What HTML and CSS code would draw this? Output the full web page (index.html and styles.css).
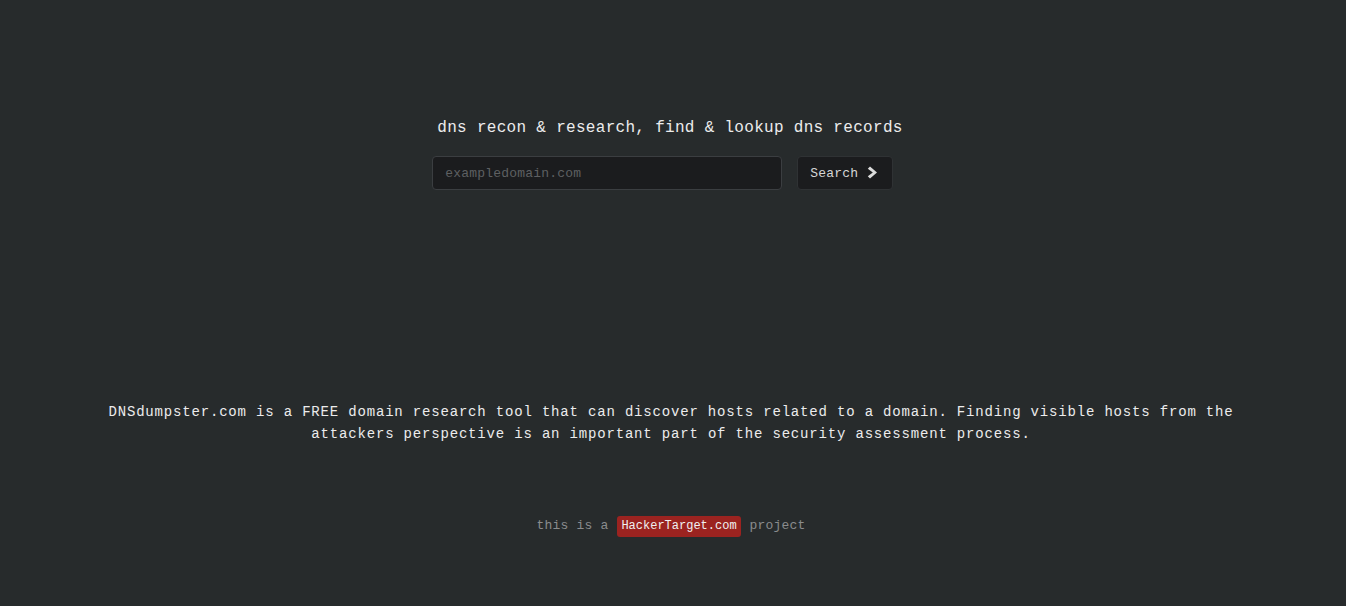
FILE: index.html
```html
<!DOCTYPE html>
<html>
<head>
<meta charset="utf-8">
<link rel="stylesheet" href="styles.css">
</head>
<body>
<div class="page">
  <section class="hero">
    <h1 class="tagline">dns recon &amp; research, find &amp; lookup dns records</h1>
    <form class="search">
      <input class="search-input" type="text" placeholder="exampledomain.com">
      <button class="search-btn" type="button">Search <svg class="chev" width="12" height="15" viewBox="0 0 12 15"><path d="M3 1.5 L10 7.5 L3 13.5 L0.8 11.3 L5.8 7.5 L0.8 3.7 Z" fill="#dcdcdc"/></svg></button>
    </form>
  </section>
  <p class="about">DNSdumpster.com is a FREE domain research tool that can discover hosts related to a domain. Finding visible hosts from the attackers perspective is an important part of the security assessment process.</p>
  <p class="credit">this is a <span class="badge">HackerTarget.com</span> project</p>
</div>
</body>
</html>
```
FILE: styles.css
```css
html, body {
  margin: 0;
  padding: 0;
  background: #272b2c;
  height: 100%;
}
body {
  font-family: "Liberation Mono", "Courier New", monospace;
  color: #e6e6e6;
}
.page {
  display: flex;
  flex-direction: column;
  align-items: center;
  padding-top: 117px;
}
.hero {
  display: flex;
  flex-direction: column;
  align-items: flex-start;
  padding-right: 6px;
}
.tagline {
  margin: 0;
  font-weight: normal;
  font-size: 16px;
  letter-spacing: 0.3px;
  line-height: 22px;
  color: #ececec;
}
.search {
  display: flex;
  gap: 15px;
  margin: 17px 0 0 -5px;
}
.search-input {
  box-sizing: border-box;
  width: 350px;
  height: 34px;
  padding: 0 12px;
  background: #1b1c1e;
  border: 1px solid #3b3e41;
  border-radius: 4px;
  font-family: "Liberation Mono", monospace;
  font-size: 13px;
  letter-spacing: 0.2px;
  color: #ddd;
  outline: none;
}
.search-input::placeholder {
  color: #5e6062;
}
.search-btn {
  box-sizing: border-box;
  width: 96px;
  height: 34px;
  display: flex;
  align-items: center;
  justify-content: flex-start;
  gap: 9px;
  padding: 0 0 0 12px;
  background: #1b1c1e;
  border: 1px solid #2f3234;
  border-radius: 4px;
  font-family: "Liberation Mono", monospace;
  font-size: 13px;
  letter-spacing: 0.2px;
  color: #d6d6d6;
}
.chev {
  display: block;
  margin-top: -2px;
}
.about {
  margin: 211px 0 0 0;
  width: 1140px;
  padding-right: 4px;
  text-align: center;
  font-size: 14px;
  letter-spacing: 0.82px;
  line-height: 22px;
  color: #ececec;
}
.credit {
  margin: 70px 0 0 0;
  padding-right: 4px;
  font-size: 13px;
  letter-spacing: 0.2px;
  line-height: 22px;
  color: #8a8c8d;
}
.badge {
  display: inline-block;
  background: #9b2320;
  color: #f0f0f0;
  font-size: 12px;
  letter-spacing: 0;
  line-height: 21px;
  padding: 0 4px;
  border-radius: 3px;
  margin: 0 1px;
}
```
